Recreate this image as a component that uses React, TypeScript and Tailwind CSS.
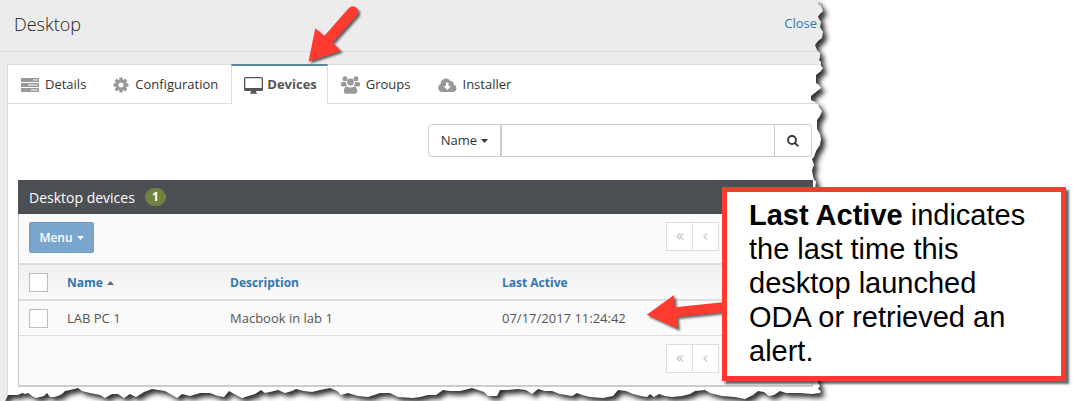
import type { ReactNode } from "react";

type Device = {
  id: number;
  name: string;
  description: string;
  lastActive: string;
};

const devices: Device[] = [
  { id: 1, name: "LAB PC 1", description: "Macbook in lab 1", lastActive: "07/17/2017 11:24:42" },
];

const RIGHT_EDGE =
  "L818 0 L818 4 L821 6 L823 11 L819 15 L818 17 L821 22 L820 27 L823 32 L822 38 L818 41 L815 45 L817 50 L820 53 L820 57 L819 60 L821 62 L821 66 L823 68 L821 71 L816 75 L816 83 L819 85 L821 88 L816 92 L811 96 L811 100 L815 102 L818 104 L819 107 L822 111 L820 116 L817 120 L817 129 L820 134 L821 139 L820 145 L816 151 L814 157 L812 159 L814 165 L812 170 L813 176 L814 180 L816 181 L815 190 L817 380 L820 386 L818 389 L821 391 L820 393";

const BOTTOM_EDGE =
  "L812 394 L800 393 L786 393 L780 391 L774 395 L769 396 L764 392 L758 391 L753 395 L745 399 L735 397 L722 396 L710 393 L705 390 L695 391 L690 394 L682 396 L672 397 L665 396 L659 394 L654 397 L650 394 L647 397 L641 396 L633 394 L626 391 L618 390 L613 396 L603 398 L590 397 L582 395 L577 393 L572 396 L560 394 L552 391 L545 391 L538 389 L532 394 L526 390 L518 389 L508 390 L500 390 L497 396 L488 396 L484 392 L478 390 L472 388 L460 391 L450 391 L443 390 L436 395 L428 395 L420 397 L413 398 L398 397 L390 393 L380 393 L368 397 L358 396 L348 393 L341 395 L337 391 L330 388 L320 390 L312 392 L304 391 L296 389 L292 391 L285 393 L278 390 L270 392 L265 393 L261 390 L255 394 L242 398 L236 395 L229 391 L224 397 L218 396 L210 393 L200 393 L190 396 L182 394 L177 398 L172 395 L165 391 L152 389 L144 392 L141 394 L136 397 L130 394 L124 398 L118 394 L112 394 L105 398 L100 395 L90 393 L82 391 L78 388 L70 390 L65 391 L62 394 L58 396 L54 397 L50 397 L47 393 L44 396 L36 398 L32 396 L28 393 L25 394 L22 393 L18 395 L8 395 L5 401 L0 401 Z";

const PAGE_SHAPE = `M0 0 ${RIGHT_EDGE} ${BOTTOM_EDGE}`;

function TasksIcon() {
  return (
    <svg width="18" height="14" viewBox="0 0 18 14" aria-hidden="true">
      <g fill="#999">
        <rect width="18" height="4" rx="0.5" />
        <rect y="5" width="18" height="4" rx="0.5" />
        <rect y="10" width="18" height="4" rx="0.5" />
      </g>
      <path d="M12 2h4.500M7 7h9.500M10 12h6.500" stroke="#fff" strokeWidth="1" />
    </svg>
  );
}

function GearIcon() {
  return (
    <svg width="16" height="16" viewBox="0 0 16 16" aria-hidden="true">
      <g fill="#999">
        {[0, 45, 90, 135].map((angle) => (
          <rect key={angle} x="6.3" y="0.5" width="3.4" height="15" rx="0.8" transform={`rotate(${angle} 8 8)`} />
        ))}
        <circle cx="8" cy="8" r="5.5" />
      </g>
      <circle cx="8" cy="8" r="2.5" fill="#fff" />
    </svg>
  );
}

function MonitorIcon() {
  return (
    <svg width="19" height="17" viewBox="0 0 19 17" aria-hidden="true">
      <path
        fill="#555"
        fillRule="evenodd"
        d="M1.500 0h16A1.500 1.500 0 0 1 19 1.500v11a1.500 1.500 0 0 1-1.500 1.500H12v1.200l1 .8v.8H6v-.8l1-.8V14H1.500A1.500 1.500 0 0 1 0 12.500v-11A1.500 1.500 0 0 1 1.500 0ZM1.300 1.300v9.700h16.400V1.300Z"
      />
    </svg>
  );
}

function GroupIcon() {
  return (
    <svg width="19" height="18" viewBox="0 0 19 18" aria-hidden="true">
      <g fill="#999">
        <circle cx="4" cy="2.800" r="2.500" />
        <circle cx="15" cy="2.800" r="2.500" />
        <path d="M1.500 6h3.400A5 5 0 0 0 6 9.500L4 10.500H2Q0 10.500 0 9V8Q0 6.200 1.500 6ZM17.500 6h-3.400A5 5 0 0 1 13 9.500l2 1H17q2 0 2-1.500V8q0-1.800-1.500-2Z" />
        <circle cx="9.500" cy="6" r="3.400" />
        <path d="M5.500 10.500q4 2 8 0 2.700.8 2.700 5 0 2.200-2.200 2.200H5q-2.200 0-2.200-2.200 0-4.200 2.700-5Z" />
      </g>
    </svg>
  );
}

function CloudIcon() {
  return (
    <svg width="19" height="14" viewBox="0 0 19 14" aria-hidden="true">
      <path
        fill="#999"
        d="M4.300 14A4.300 4.300 0 0 1 2.700 5.800 5.300 5.300 0 0 1 12.500 3a3 3 0 0 1 3.200 3.600A3.800 3.800 0 0 1 15.200 14Z"
      />
      <path fill="#fff" d="M8 4.500h2.500V8H13l-3.700 4L5.500 8H8Z" />
    </svg>
  );
}

function SearchIcon() {
  return (
    <svg width="12" height="12" viewBox="0 0 12 12" fill="none" stroke="#333" strokeWidth="1.8" aria-hidden="true">
      <circle cx="5" cy="5" r="4" />
      <path d="m8 8 3.300 3.300" />
    </svg>
  );
}

function Caret({ up = false }: { up?: boolean }) {
  return (
    <svg width="7" height="4" viewBox="0 0 7 4" fill="currentColor" className="inline-block" aria-hidden="true">
      <path d={up ? "M0 4h7L3.500 0Z" : "M0 0h7L3.500 4Z"} />
    </svg>
  );
}

function Tab({ icon, label, active = false }: { icon: ReactNode; label: string; active?: boolean }) {
  return (
    <button
      type="button"
      role="tab"
      aria-selected={active}
      className={
        active
          ? "-mb-px -ml-px flex h-10 items-center gap-1 border-x border-t-2 border-x-[#ddd] border-t-[#57889c] bg-white pr-2.5 pl-3 font-bold text-[#555]"
          : "flex h-10 items-center gap-1.5 border-t border-[#ddd] pr-3.5 pl-[13px] text-[#333]"
      }
    >
      {icon}
      {label}
    </button>
  );
}

function Pager() {
  return (
    <nav aria-label="Pages" className="mr-[93px] flex text-[#999]">
      <button type="button" aria-label="First page" className="flex h-[29px] w-[27px] items-center justify-center border border-[#ddd] bg-white">
        <svg width="8" height="7" viewBox="0 0 8 7" fill="none" stroke="currentColor" aria-hidden="true">
          <path d="M4 .5 1 3.500l3 3M7 .5l-3 3 3 3" />
        </svg>
      </button>
      <button type="button" aria-label="Previous page" className="-ml-px flex h-[29px] w-[27px] items-center justify-center border border-[#ddd] bg-white">
        <svg width="5" height="7" viewBox="0 0 5 7" fill="none" stroke="currentColor" aria-hidden="true">
          <path d="m4 .5-3 3 3 3" />
        </svg>
      </button>
    </nav>
  );
}

function Checkbox({ label }: { label: string }) {
  return (
    <input
      type="checkbox"
      aria-label={label}
      className="block h-[19px] w-[19px] appearance-none border border-[#bdbdbd] bg-white checked:bg-[#3276b1]"
    />
  );
}

function DeviceTable() {
  return (
    <section className="mr-4 ml-2.5">
      <header className="flex h-[34px] items-center bg-[#4c4f53] pr-[17px] pl-[11px] text-white">
        <h2 className="pt-0.5 text-sm">Desktop devices</h2>
        <span className="ml-2.5 flex h-[18px] w-[21px] items-center justify-center rounded-full bg-[#71843f] text-xs font-bold">
          1
        </span>
        <span className="ml-auto h-full w-px bg-[#44474b]" />
      </header>
      <div className="border-x border-b-2 border-[#ccc] bg-[#fafafa]">
        <div className="flex h-[49px] items-start justify-between pt-2 pl-2.5">
          <button
            type="button"
            className="flex h-[31px] w-[65px] items-center justify-center gap-1 rounded-xs border border-[#6f9cc4] bg-[#7aa5cd] text-xs font-semibold text-white"
          >
            Menu
            <Caret />
          </button>
          <Pager />
        </div>
        <table className="w-full table-fixed border-separate border-spacing-0 text-left">
          <thead>
            <tr className="h-[38px] text-xs text-[#3276b1]">
              <th className="w-[38px] border-y-2 border-[#ddd] bg-linear-to-b from-[#f0f0f0] to-[#fafafa] pl-2.5">
                <Checkbox label="Select all devices" />
              </th>
              <th className="w-[163px] border-y-2 border-[#ddd] bg-linear-to-b from-[#f0f0f0] to-[#fafafa] pt-0.5 pl-2.5">
                <a href="#name" className="flex items-center gap-1">
                  Name
                  <span className="flex text-[#666]"><Caret up /></span>
                </a>
              </th>
              <th className="w-[272px] border-y-2 border-[#ddd] bg-linear-to-b from-[#f0f0f0] to-[#fafafa] pt-0.5 pl-2.5">
                <a href="#description">Description</a>
              </th>
              <th className="border-y-2 border-[#ddd] bg-linear-to-b from-[#f0f0f0] to-[#fafafa] pt-0.5 pl-2.5">
                <a href="#last-active">Last Active</a>
              </th>
            </tr>
          </thead>
          <tbody>
            {devices.map((device) => (
              <tr key={device.id} className="h-[35px] text-[13px] text-[#555]">
                <td className="border-b border-[#ddd] pl-2.5">
                  <Checkbox label={`Select ${device.name}`} />
                </td>
                <td className="border-b border-[#ddd] pt-0.5 pl-2.5">{device.name}</td>
                <td className="border-b border-[#ddd] pt-0.5 pl-2.5">{device.description}</td>
                <td className="border-b border-[#ddd] pt-0.5 pl-2.5">{device.lastActive}</td>
              </tr>
            ))}
          </tbody>
        </table>
        <div className="flex h-[49px] items-start justify-end pt-2">
          <Pager />
        </div>
      </div>
    </section>
  );
}

/* Torn paper edge, drawn over the right and bottom sides of the page */
function TornEdge() {
  return (
    <svg width="1079" height="401" viewBox="0 0 1079 401" className="pointer-events-none absolute top-0 left-0" aria-hidden="true">
      <defs>
        <clipPath id="outside">
          <path clipRule="evenodd" d={`M0 0H1079V401H0Z ${PAGE_SHAPE}`} />
        </clipPath>
        <filter id="soft" x="-5%" y="-5%" width="110%" height="110%">
          <feGaussianBlur stdDeviation="2.500" />
        </filter>
      </defs>
      <g clipPath="url(#outside)">
        <rect width="1079" height="401" fill="#fff" />
        <path d={PAGE_SHAPE} fill="#333" filter="url(#soft)" transform="translate(4 4)" />
      </g>
    </svg>
  );
}

function Arrows() {
  return (
    <svg
      width="1079"
      height="401"
      viewBox="0 0 1079 401"
      fill="#ff3b30"
      className="pointer-events-none absolute top-0 left-0 drop-shadow-[2px_2px_1px_rgba(0,0,0,0.6)]"
      aria-hidden="true"
    >
      <path d="M308.500 61.500 315.300 28.300 324.300 36 348.800 8Q353 4.500 356.500 8 360 11.500 356.800 15.500L332.300 42.700 341 50.700Z" />
      <path d="m646.700 314.700 27.300-19.700 1 12.300 48-5v10l-46 4.700 1 12Z" />
    </svg>
  );
}

export default function App() {
  return (
    <div className="relative overflow-hidden bg-white font-['Open_Sans',sans-serif] text-[13px]">
      <main className="mr-[250px] h-[401px] bg-[#ececec]">
        <header className="flex h-[52px] items-center justify-between border-b border-[#e0e0e0] pr-3 pb-1 pl-3.5">
          <h1 className="text-lg font-light text-[#222]">Desktop</h1>
          <a href="#close" className="text-[#3276b1]">Close</a>
        </header>
        <div className="mt-3 ml-[7px] h-full border-l border-[#ddd] bg-white">
          <div role="tablist" className="flex h-10 border-b border-[#ddd]">
            <Tab icon={<TasksIcon />} label="Details" />
            <Tab icon={<GearIcon />} label="Configuration" />
            <Tab icon={<MonitorIcon />} label="Devices" active />
            <Tab icon={<GroupIcon />} label="Groups" />
            <Tab icon={<CloudIcon />} label="Installer" />
            <span className="flex-1 border-t border-[#ddd]" />
          </div>
          <form className="mt-5 mr-[17px] mb-[23px] flex h-[33px] justify-end" onSubmit={(e) => e.preventDefault()}>
            <button
              type="button"
              className="flex w-[73px] items-center justify-center gap-1 rounded-l-sm border border-[#ccc] text-[#333]"
            >
              Name
              <Caret />
            </button>
            <input type="search" aria-label="Search by name" className="w-[274px] border border-[#ccc] px-2 outline-none" />
            <button
              type="submit"
              aria-label="Search"
              className="flex w-[37px] items-center justify-center rounded-r-sm border border-l-0 border-[#ccc]"
            >
              <SearchIcon />
            </button>
          </form>
          <DeviceTable />
        </div>
      </main>

      <TornEdge />
      <Arrows />

      <aside className="absolute top-[187px] left-[722px] w-[344px] border-5 border-[#ff3b30] bg-white py-1.5 pr-5 pl-[22px] font-['Liberation_Sans',Arial,sans-serif] text-[29px] leading-[34px] text-black shadow-[3px_3px_2px_rgba(0,0,0,0.6)]">
        <p className="pb-0.5">
          <strong>Last Active</strong> indicates the last time this desktop launched ODA or retrieved an alert.
        </p>
      </aside>
    </div>
  );
}
